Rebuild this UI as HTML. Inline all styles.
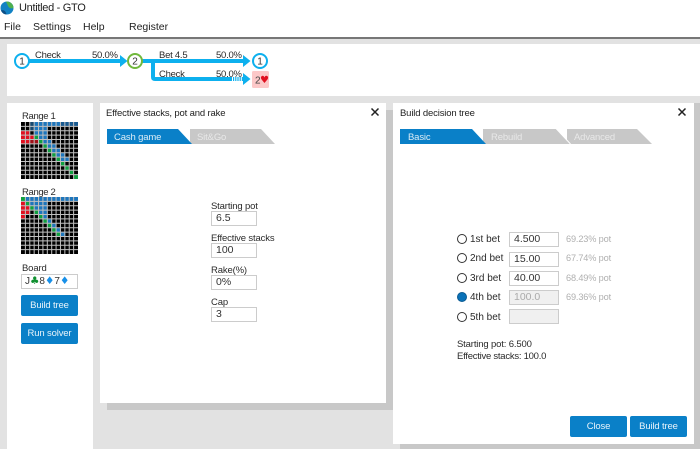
<!DOCTYPE html>
<html><head><meta charset="utf-8"><style>
html,body{margin:0;padding:0}
body{width:700px;height:449px;overflow:hidden;position:relative;background:#e2e2e2;font-family:"Liberation Sans",sans-serif;color:#2a2a2a;font-size:9.500px;letter-spacing:-.15px}
.a{position:absolute;white-space:nowrap}
.w{position:absolute;background:#fff}
.in{position:absolute;box-sizing:border-box;height:15px;background:#fff;border:1px solid #ccc;font-size:10.500px;line-height:13px;padding-left:4px;color:#333;letter-spacing:0}
.btn{position:absolute;background:#0a80c8;color:#e8f3fa;border-radius:2px;text-align:center;line-height:21px;height:21px}
.g{color:#b0b0b0;font-size:9.200px}
.t{letter-spacing:-.25px}
.b{font-size:10px;letter-spacing:0}
.r{position:absolute;left:457px;width:10px;height:10px;box-sizing:border-box;border:1px solid #333;border-radius:50%;background:#fff}
.l{color:#e8e8e8}
</style></head><body>
<div class="w" style="left:0;top:0;width:700px;height:37px"></div>
<div class="a" style="left:0;top:37px;width:700px;height:2px;background:#777"></div>
<svg class="a" style="left:0;top:1px" width="14" height="14" viewBox="0 0 14 14"><circle cx="7" cy="7" r="6.500" fill="#1282c4"/><path d="M6 .6A6.500 6.500 0 0 1 13.500 7C11 8 9 7 8 5 7.500 3.500 6.500 2 6 .6Z" fill="#4fb04f"/><path d="M1 9.500C3.500 8.500 5.500 9.500 6.500 13.500A6.500 6.500 0 0 1 1 9.500Z" fill="#0d4f86"/></svg>
<div class="a" style="left:19px;top:2px;font-size:11px;letter-spacing:-.3px;color:#222">Untitled - GTO</div>
<div class="a" style="left:4px;top:21px;font-size:10.500px;letter-spacing:0;color:#222">File</div>
<div class="a" style="left:33px;top:21px;font-size:10.500px;letter-spacing:0;color:#222">Settings</div>
<div class="a" style="left:83px;top:21px;font-size:10.500px;letter-spacing:0;color:#222">Help</div>
<div class="a" style="left:129px;top:21px;font-size:10.500px;letter-spacing:0;color:#222">Register</div>

<div class="w" style="left:7px;top:44px;width:693px;height:52px"></div>
<svg class="a" style="left:0;top:40px" width="290" height="56" viewBox="0 0 290 56">
<g fill="none" stroke="#0db0ee" stroke-width="4">
<path d="M26 21H122"/><path d="M140 21H246"/><path d="M153 21V37Q153 39 155 39H245"/>
</g>
<path d="M232 39H243" stroke="#fff" stroke-width="4" stroke-dasharray="1 1.200" fill="none"/>
<path d="M120 15 127.500 21 120 27Z M243 15 250.500 21 243 27Z M243 33 250.500 39 243 45Z" fill="#0db0ee"/>
<circle cx="22" cy="21" r="7" fill="#fff" stroke="#0db0ee" stroke-width="2"/>
<circle cx="135" cy="21" r="7" fill="#fff" stroke="#70b83c" stroke-width="2"/>
<circle cx="260" cy="21" r="7" fill="#fff" stroke="#0db0ee" stroke-width="2"/>
<rect x="252" y="31" width="17" height="17" rx="1.500" fill="#fcc8c8"/>
<text x="22" y="24.500" font-size="10" text-anchor="middle" fill="#333" font-family="Liberation Sans">1</text>
<text x="135" y="24.500" font-size="10" text-anchor="middle" fill="#333" font-family="Liberation Sans">2</text>
<text x="260" y="24.500" font-size="10" text-anchor="middle" fill="#333" font-family="Liberation Sans">1</text>
<text x="255" y="43.500" font-size="10" fill="#444" font-family="Liberation Sans">2</text>
<text x="260" y="43" font-size="10" fill="#e01020" font-family="DejaVu Sans">♥</text>
</svg>
<div class="a t" style="left:35px;top:50px">Check</div>
<div class="a t" style="left:92px;top:50px">50.0%</div>
<div class="a t" style="left:159px;top:50px">Bet 4.5</div>
<div class="a t" style="left:216px;top:50px">50.0%</div>
<div class="a t" style="left:159px;top:69px">Check</div>
<div class="a t" style="left:216px;top:69px">50.0%</div>

<div class="w" style="left:7px;top:103px;width:86px;height:346px"></div>
<div class="a" style="left:22px;top:111px;letter-spacing:-.35px">Range 1</div>
<svg class="a" style="left:21px;top:122px" width="57" height="57" viewBox="0 0 130 130">
<rect width="130" height="130" fill="#000"/>
<g fill="#1e76bc">
<rect x="30" y="0" width="100" height="10"/><rect x="30" y="10" width="30" height="10"/><rect x="30" y="20" width="30" height="10"/><rect x="40" y="30" width="20" height="10"/><rect x="50" y="40" width="20" height="10"/><rect x="60" y="50" width="20" height="10"/><rect x="70" y="60" width="20" height="10"/><rect x="80" y="70" width="20" height="10"/><rect x="90" y="80" width="20" height="10"/>
</g>
<rect x="20" y="0" width="10" height="20" fill="#17486e"/><rect x="90" y="0" width="40" height="10" fill="#195a90"/>
<g fill="#e01020"><rect x="0" y="20" width="20" height="10"/><rect x="0" y="30" width="30" height="10"/><rect x="0" y="40" width="20" height="10"/></g>
<rect x="20" y="40" width="20" height="10" fill="#a01018"/>
<g fill="#10a040"><rect x="30" y="30" width="10" height="10"/><rect x="40" y="40" width="10" height="10"/><rect x="50" y="50" width="10" height="10"/><rect x="60" y="60" width="10" height="10"/><rect x="70" y="70" width="10" height="10"/><rect x="80" y="80" width="10" height="10"/><rect x="90" y="90" width="10" height="10"/><rect x="100" y="100" width="10" height="10"/><rect x="110" y="110" width="10" height="10"/><rect x="120" y="120" width="10" height="10"/></g>
<g stroke="#c0c0c0" stroke-width="2.300"><path d="M10 0V130M20 0V130M30 0V130M40 0V130M50 0V130M60 0V130M70 0V130M80 0V130M90 0V130M100 0V130M110 0V130M120 0V130M0 10H130M0 20H130M0 30H130M0 40H130M0 50H130M0 60H130M0 70H130M0 80H130M0 90H130M0 100H130M0 110H130M0 120H130"/></g>
</svg>
<div class="a" style="left:22px;top:187px;letter-spacing:-.35px">Range 2</div>
<svg class="a" style="left:21px;top:197px" width="57" height="57" viewBox="0 0 130 130">
<rect width="130" height="130" fill="#000"/>
<g fill="#1e76bc">
<rect x="10" y="0" width="120" height="10"/><rect x="20" y="10" width="40" height="10"/><rect x="30" y="20" width="30" height="10"/><rect x="40" y="30" width="20" height="10"/><rect x="50" y="40" width="10" height="10"/><rect x="60" y="50" width="10" height="10"/><rect x="70" y="60" width="10" height="10"/><rect x="80" y="70" width="10" height="10"/><rect x="90" y="80" width="10" height="10"/>
</g>
<g fill="#e01020"><rect x="0" y="10" width="10" height="10"/><rect x="0" y="20" width="20" height="10"/><rect x="0" y="30" width="20" height="10"/><rect x="0" y="40" width="10" height="10"/></g>
<g fill="#10a040"><rect x="0" y="0" width="10" height="10"/><rect x="10" y="10" width="10" height="10"/><rect x="20" y="20" width="10" height="10"/><rect x="30" y="30" width="10" height="10"/><rect x="40" y="40" width="10" height="10"/><rect x="50" y="50" width="10" height="10"/><rect x="60" y="60" width="10" height="10"/><rect x="70" y="70" width="10" height="10"/><rect x="80" y="80" width="10" height="10"/></g>
<g stroke="#c0c0c0" stroke-width="2.300"><path d="M10 0V130M20 0V130M30 0V130M40 0V130M50 0V130M60 0V130M70 0V130M80 0V130M90 0V130M100 0V130M110 0V130M120 0V130M0 10H130M0 20H130M0 30H130M0 40H130M0 50H130M0 60H130M0 70H130M0 80H130M0 90H130M0 100H130M0 110H130M0 120H130"/></g>
</svg>
<div class="a" style="left:22px;top:263px">Board</div>
<div class="in" style="left:21px;top:274px;width:57px;padding-left:3px;font-size:10px;white-space:nowrap;overflow:hidden">J<span style="color:#109030;font-family:'DejaVu Sans';font-size:10.500px">♣</span>8<span style="color:#1890e8;font-family:'DejaVu Sans';font-size:10.500px">♦</span>7<span style="color:#1890e8;font-family:'DejaVu Sans';font-size:10.500px">♦</span></div>
<div class="btn" style="left:21px;top:295px;width:57px">Build tree</div>
<div class="btn" style="left:21px;top:323px;width:57px">Run solver</div>

<div class="a" style="left:107px;top:110px;width:286px;height:300px;background:#c8c8c8"></div>
<div class="w" style="left:100px;top:103px;width:286px;height:300px"></div>
<div class="a" style="left:106px;top:108px;color:#222">Effective stacks, pot and rake</div>
<svg class="a" style="left:370px;top:107px" width="10" height="10"><path d="M1.500 1.500 8.500 8.500M8.500 1.500 1.500 8.500" stroke="#222" stroke-width="1.500"/></svg>
<svg class="a" style="left:107px;top:129px" width="175" height="15"><path d="M83 0H154L168 15H83Z" fill="#c8c8c8"/><path d="M0 0H71L85 15H0Z" fill="#0a80c8"/></svg>
<div class="a" style="left:114px;top:132px;color:#dcecf6">Cash game</div>
<div class="a l" style="left:197px;top:132px">Sit&amp;Go</div>
<div class="a" style="left:211px;top:201px">Starting pot</div>
<div class="in" style="left:211px;top:211px;width:46px">6.5</div>
<div class="a" style="left:211px;top:233px">Effective stacks</div>
<div class="in" style="left:211px;top:243px;width:46px">100</div>
<div class="a" style="left:211px;top:265px">Rake(%)</div>
<div class="in" style="left:211px;top:275px;width:46px">0%</div>
<div class="a" style="left:211px;top:297px">Cap</div>
<div class="in" style="left:211px;top:307px;width:46px">3</div>

<div class="a" style="left:400px;top:103px;width:300px;height:346px;background:#c8c8c8"></div>
<div class="w" style="left:393px;top:103px;width:301px;height:341px"></div>
<div class="a" style="left:400px;top:108px;color:#222">Build decision tree</div>
<svg class="a" style="left:677px;top:107px" width="10" height="10"><path d="M1.500 1.500 8.500 8.500M8.500 1.500 1.500 8.500" stroke="#222" stroke-width="1.500"/></svg>
<svg class="a" style="left:400px;top:129px" width="255" height="15"><path d="M167 0H237L252 15H167Z" fill="#c8c8c8"/><path d="M83 0H156L170 15H83Z" fill="#c8c8c8"/><path d="M156 -.5 170.500 15" stroke="#fff" stroke-width="1"/><path d="M0 0H72L86 15H0Z" fill="#0a80c8"/></svg>
<div class="a" style="left:408px;top:132px;color:#dcecf6">Basic</div>
<div class="a l" style="left:491px;top:132px">Rebuild</div>
<div class="a l" style="left:574px;top:132px">Advanced</div>

<div class="r" style="top:234px"></div><div class="a b" style="left:470px;top:234px">1st bet</div>
<div class="in" style="left:509px;top:232px;width:50px">4.500</div><div class="a g" style="left:566px;top:234px">69.23% pot</div>
<div class="r" style="top:253px"></div><div class="a b" style="left:470px;top:253px">2nd bet</div>
<div class="in" style="left:509px;top:252px;width:50px">15.00</div><div class="a g" style="left:566px;top:253px">67.74% pot</div>
<div class="r" style="top:273px"></div><div class="a b" style="left:470px;top:273px">3rd bet</div>
<div class="in" style="left:509px;top:271px;width:50px">40.00</div><div class="a g" style="left:566px;top:273px">68.49% pot</div>
<div class="r" style="top:292px;background:#0a72b8;border-color:#0a5a92"></div><div class="a b" style="left:470px;top:292px">4th bet</div>
<div class="in" style="left:509px;top:290px;width:50px;background:#f0f0f0;color:#aaa">100.0</div><div class="a g" style="left:566px;top:292px">69.36% pot</div>
<div class="r" style="top:312px"></div><div class="a b" style="left:470px;top:312px">5th bet</div>
<div class="in" style="left:509px;top:309px;width:50px;background:#f0f0f0"></div>
<div class="a" style="left:457px;top:339px">Starting pot: 6.500</div>
<div class="a" style="left:457px;top:351px;letter-spacing:-.25px">Effective stacks: 100.0</div>
<div class="btn" style="left:570px;top:416px;width:57px">Close</div>
<div class="btn" style="left:630px;top:416px;width:57px">Build tree</div>
</body></html>
